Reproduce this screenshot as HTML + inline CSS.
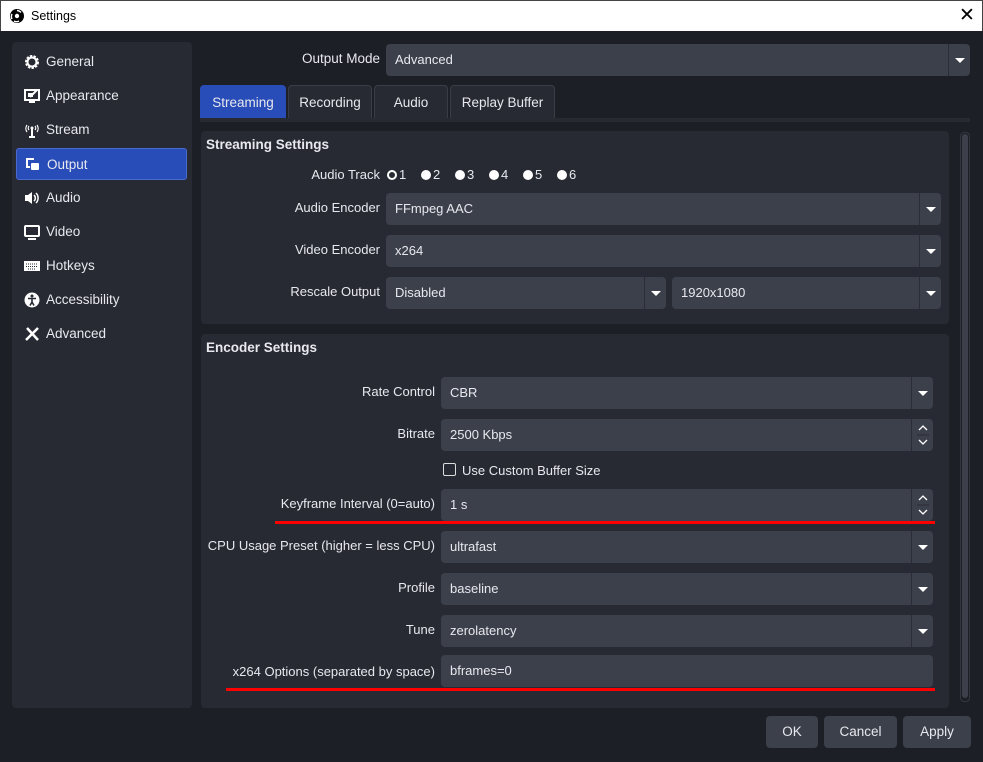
<!DOCTYPE html>
<html><head><style>
*{box-sizing:border-box;margin:0;padding:0}
body{width:983px;height:762px;background:#1d1f26;font-family:"Liberation Sans","DejaVu Sans",sans-serif;font-size:13px;color:#e8e8ee;position:relative;overflow:hidden}
.a{position:absolute}
.title{left:0;top:0;width:983px;height:31px;background:#fff;color:#000;border:1px solid #444;border-bottom:none}
.side{left:12px;top:42px;width:180px;height:666px;background:#272a33;border-radius:4px}
.item{position:absolute;left:4px;width:171px;height:32px;line-height:32px;padding-left:30px;font-size:13.5px}
.item.sel{background:#284cb8;border:1px solid #4a6ad0;border-radius:3px}
.ic{position:absolute;left:8px;top:8px;width:16px;height:16px}
.box{background:#3c404b;border-radius:4px;height:32px;line-height:32px;padding-left:9px;font-size:13px}
.dd{position:absolute;right:0;top:0;width:22px;height:32px;border-left:1px solid #2a2d35}
.dd:after{content:"";position:absolute;left:6px;top:14px;border-left:5px solid transparent;border-right:5px solid transparent;border-top:5px solid #fff}
.lbl{text-align:right;font-size:13px}
.grp{background:#272a33;border-radius:4px}
.tab{top:85px;height:33px;line-height:33px;text-align:center;background:#272a33;border:1px solid #3a3d46;border-bottom:none;border-radius:4px 4px 0 0;font-size:13.5px}
.red{background:#f00;height:3px}
.btn{top:716px;height:32px;line-height:32px;text-align:center;background:#3c404b;border-radius:4px;font-size:13.5px}
.sp{position:absolute;right:0;top:0;width:22px;height:32px;border-left:1px solid #2a2d35}
.sp svg{position:absolute;left:5px;top:3px}
.rad{display:inline-block;width:10px;height:10px;border-radius:50%;background:#fff;margin-right:2px;vertical-align:-1px}
.r{position:absolute;top:167px}
</style></head><body>
<div class="a title">
<svg class="a" style="left:9px;top:8px" width="14" height="14" viewBox="0 0 14 14"><circle cx="7" cy="7" r="7" fill="#000"/><circle cx="7" cy="7" r="2.2" fill="#fff"/><path d="M7 1.5a5.5 5.5 0 0 1 4 2M2 10a5.5 5.5 0 0 1 0-5M9 12a5 5 0 0 1-5 0" stroke="#fff" stroke-width="1.4" fill="none"/></svg>
<span class="a" style="left:30px;top:8px;font-size:12.5px">Settings</span>
<span class="a" style="left:958px;top:3px;font-size:19px">✕</span>
</div>
<div class="a side">
<div class="item" style="top:4px"><svg class="ic" viewBox="0 0 16 16"><circle cx="8" cy="8" r="5.5" fill="none" stroke="#fff" stroke-width="3" stroke-dasharray="2.2 1.2"/><circle cx="8" cy="8" r="4.5" fill="none" stroke="#fff" stroke-width="2"/></svg>General</div>
<div class="item" style="top:38px"><svg class="ic" viewBox="0 0 16 16"><rect x="1" y="2" width="14" height="10" fill="none" stroke="#fff" stroke-width="2"/><path d="M5 14h6M6 9l7-7" stroke="#fff" stroke-width="2"/><rect x="4" y="5" width="5" height="4" fill="#fff"/></svg>Appearance</div>
<div class="item" style="top:72px"><svg class="ic" viewBox="0 0 16 16"><path d="M8 6v9M5 15h6" stroke="#fff" stroke-width="2"/><path d="M3 3a6 6 0 0 0 0 7M13 3a6 6 0 0 1 0 7M5 4a3 3 0 0 0 0 4M11 4a3 3 0 0 1 0 4" stroke="#fff" fill="none" stroke-width="1.2"/><circle cx="8" cy="6" r="1.5" fill="#fff"/></svg>Stream</div>
<div class="item sel" style="top:106px"><svg class="ic" viewBox="0 0 16 16"><path d="M9 2H2v8h3" stroke="#fff" stroke-width="2" fill="none"/><rect x="6" y="6" width="8" height="7" rx="1" fill="#fff"/></svg>Output</div>
<div class="item" style="top:140px"><svg class="ic" viewBox="0 0 16 16"><path d="M1 5h3l4-3v12l-4-3H1z" fill="#fff"/><path d="M10 5a4 4 0 0 1 0 6M12 3a7 7 0 0 1 0 10" stroke="#fff" stroke-width="1.5" fill="none"/></svg>Audio</div>
<div class="item" style="top:174px"><svg class="ic" viewBox="0 0 16 16"><rect x="1" y="2" width="14" height="10" rx="1" fill="none" stroke="#fff" stroke-width="2"/><path d="M4 15h8" stroke="#fff" stroke-width="2"/></svg>Video</div>
<div class="item" style="top:208px"><svg class="ic" viewBox="0 0 16 16"><rect x="0" y="3" width="16" height="10" fill="#fff"/><path d="M2 6h12M2 8.5h12M4 11h8" stroke="#272a33" stroke-width="1" stroke-dasharray="1 1"/></svg>Hotkeys</div>
<div class="item" style="top:242px"><svg class="ic" viewBox="0 0 16 16"><circle cx="8" cy="8" r="7.5" fill="#fff"/><circle cx="8" cy="4" r="1.5" fill="#272a33"/><path d="M4 6.5h8M8 6v4l-2 3.5M8 10l2 3.5" stroke="#272a33" stroke-width="1.6" fill="none"/></svg>Accessibility</div>
<div class="item" style="top:276px"><svg class="ic" viewBox="0 0 16 16"><path d="M2 14L14 2M3 2l11 12" stroke="#fff" stroke-width="2.5"/></svg>Advanced</div>
</div>
<div class="a lbl" style="left:200px;width:180px;top:51px;font-size:13.5px">Output Mode</div>
<div class="a box" style="left:386px;top:44px;width:584px">Advanced<div class="dd"></div></div>
<div class="a tab" style="left:200px;width:86px;background:#284cb8;border-color:#284cb8">Streaming</div>
<div class="a tab" style="left:288px;width:84px">Recording</div>
<div class="a tab" style="left:374px;width:74px">Audio</div>
<div class="a tab" style="left:450px;width:105px">Replay Buffer</div>
<div class="a" style="left:200px;top:118px;width:770px;height:4px;background:#272a33"></div>
<div class="a" style="left:960px;top:132px;width:10px;height:570px;border:1px solid #33363f;border-radius:4px;background:#1d1f26"><div style="margin:1px;height:564px;background:#3c404b;border-radius:3px"></div></div>

<div class="a grp" style="left:201px;top:131px;width:748px;height:193px"></div>
<div class="a" style="left:206px;top:137px;font-weight:bold;font-size:13.5px">Streaming Settings</div>
<div class="a lbl" style="left:200px;width:180px;top:167px">Audio Track</div>
<div class="r" style="left:387px"><span class="rad" style="background:none;border:2px solid #fff"></span>1</div>
<div class="r" style="left:421px"><span class="rad"></span>2</div>
<div class="r" style="left:455px"><span class="rad"></span>3</div>
<div class="r" style="left:489px"><span class="rad"></span>4</div>
<div class="r" style="left:523px"><span class="rad"></span>5</div>
<div class="r" style="left:557px"><span class="rad"></span>6</div>
<div class="a lbl" style="left:200px;width:180px;top:200px">Audio Encoder</div>
<div class="a box" style="left:386px;top:193px;width:555px">FFmpeg AAC<div class="dd"></div></div>
<div class="a lbl" style="left:200px;width:180px;top:242px">Video Encoder</div>
<div class="a box" style="left:386px;top:235px;width:555px">x264<div class="dd"></div></div>
<div class="a lbl" style="left:200px;width:180px;top:284px">Rescale Output</div>
<div class="a box" style="left:386px;top:277px;width:280px">Disabled<div class="dd"></div></div>
<div class="a box" style="left:672px;top:277px;width:269px">1920x1080<div class="dd"></div></div>

<div class="a grp" style="left:201px;top:334px;width:748px;height:374px"></div>
<div class="a" style="left:206px;top:340px;font-weight:bold;font-size:13.5px">Encoder Settings</div>
<div class="a lbl" style="left:200px;width:235px;top:384px">Rate Control</div>
<div class="a box" style="left:441px;top:377px;width:492px">CBR<div class="dd"></div></div>
<div class="a lbl" style="left:200px;width:235px;top:426px">Bitrate</div>
<div class="a box" style="left:441px;top:419px;width:492px">2500 Kbps<div class="sp"><svg width="12" height="26" viewBox="0 0 12 26"><path d="M2 8l4-4 4 4M2 18l4 4 4-4" stroke="#fff" stroke-width="1.3" fill="none"/><path d="M-6 13h24" stroke="#2a2d35"/></svg></div></div>
<div class="a" style="left:443px;top:463px;width:13px;height:13px;border:1px solid #ddd;border-radius:2px"></div>
<div class="a" style="left:462px;top:463px">Use Custom Buffer Size</div>
<div class="a lbl" style="left:200px;width:235px;top:496px">Keyframe Interval (0=auto)</div>
<div class="a box" style="left:441px;top:489px;width:492px">1 s<div class="sp"><svg width="12" height="26" viewBox="0 0 12 26"><path d="M2 8l4-4 4 4M2 18l4 4 4-4" stroke="#fff" stroke-width="1.3" fill="none"/><path d="M-6 13h24" stroke="#2a2d35"/></svg></div></div>
<div class="a red" style="left:275px;top:521px;width:660px"></div>
<div class="a lbl" style="left:200px;width:235px;top:538px">CPU Usage Preset (higher = less CPU)</div>
<div class="a box" style="left:441px;top:531px;width:492px">ultrafast<div class="dd"></div></div>
<div class="a lbl" style="left:200px;width:235px;top:580px">Profile</div>
<div class="a box" style="left:441px;top:573px;width:492px">baseline<div class="dd"></div></div>
<div class="a lbl" style="left:200px;width:235px;top:622px">Tune</div>
<div class="a box" style="left:441px;top:615px;width:492px">zerolatency<div class="dd"></div></div>
<div class="a lbl" style="left:200px;width:235px;top:664px">x264 Options (separated by space)</div>
<div class="a box" style="left:441px;top:655px;width:492px">bframes=0</div>
<div class="a red" style="left:226px;top:688px;width:709px"></div>

<div class="a btn" style="left:766px;width:52px">OK</div>
<div class="a btn" style="left:824px;width:73px">Cancel</div>
<div class="a btn" style="left:903px;width:68px">Apply</div>
</body></html>
